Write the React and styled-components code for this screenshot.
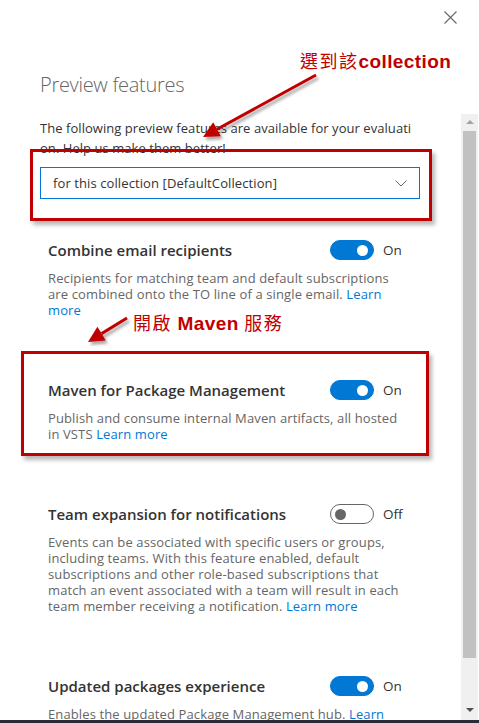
import React from "react";
import styled, { createGlobalStyle } from "styled-components";

const Global = createGlobalStyle`
  html, body { margin: 0; padding: 0; background: #fff; }
  body { font-family: "Open Sans", "Noto Sans", sans-serif; }
  * { box-sizing: border-box; }
`;

const Panel = styled.div`
  position: relative;
  width: 479px;
  height: 723px;
  overflow: hidden;
  background: #fff;
  display: flex;
  flex-direction: column;
`;

const Header = styled.div`
  height: 34px;
  display: flex;
  justify-content: flex-end;
  align-items: center;
  padding-right: 22px;
`;

const CloseButton = styled.button`
  width: 14px;
  height: 14px;
  padding: 0;
  border: none;
  background: none;
  display: flex;
  align-items: center;
  justify-content: center;
`;

const TitleArea = styled.div`
  height: 80px;
  padding: 38px 0 0 40px;
`;

const Title = styled.h1`
  margin: 0;
  font-size: 20px;
  line-height: 26px;
  font-weight: 300;
  color: #666;
  letter-spacing: -0.3px;
`;

const ScrollRegion = styled.div`
  flex: 1;
  display: flex;
  min-height: 0;
`;

const Content = styled.div`
  flex: 1;
  overflow: hidden;
  padding: 4px 0 0 40px;
`;

const Intro = styled.p`
  margin: 0;
  font-size: 13px;
  line-height: 20px;
  color: #333;
  letter-spacing: 0.05px;
`;

const Select = styled.div`
  margin-top: 9px;
  width: 380px;
  height: 32px;
  border: 1px solid #0078d4;
  display: flex;
  align-items: center;
  justify-content: space-between;
  padding: 0 12px 0 12px;
  font-size: 13px;
  letter-spacing: 0.1px;
  color: #333;
`;

const FeatureList = styled.div`
  margin-top: 41px;
  padding-left: 8px;
  display: flex;
  flex-direction: column;
  gap: 62px;
`;

const Feature = styled.div`
  width: 363px;
`;

const FeatureHead = styled.div`
  height: 20px;
  display: flex;
  align-items: center;
  justify-content: space-between;
`;

const FeatureTitle = styled.div`
  font-size: 15px;
  font-weight: 600;
  color: #333;
`;

const ToggleGroup = styled.div`
  display: flex;
  align-items: center;
  gap: 9px;
`;

const Toggle = styled.div`
  width: 44px;
  height: 20px;
  border-radius: 10px;
  display: flex;
  align-items: center;
  justify-content: ${(p) => (p.$on ? "flex-end" : "flex-start")};
  padding: 0 ${(p) => (p.$on ? "5px" : "4px")};
  background: ${(p) => (p.$on ? "#0078d4" : "#fff")};
  border: 1px solid ${(p) => (p.$on ? "#0078d4" : "#666")};
`;

const Knob = styled.span`
  width: 11px;
  height: 11px;
  border-radius: 50%;
  background: ${(p) => (p.$on ? "#fff" : "#666")};
`;

const ToggleLabel = styled.span`
  width: 28px;
  font-size: 13.5px;
  color: #333;
`;

const Desc = styled.p`
  margin: 10px 0 0;
  font-size: 13px;
  line-height: 16px;
  color: #666;
  letter-spacing: 0.12px;
`;

const Link = styled.a`
  color: #0078d4;
  text-decoration: none;
`;

const Scrollbar = styled.div`
  width: 17px;
  margin-right: 1px;
  background: #f0f0f0;
  display: flex;
  flex-direction: column;
  align-items: center;
  padding: 6px 0 8px;
`;

const Arrow = styled.div`
  width: 0;
  height: 0;
  border-left: 4px solid transparent;
  border-right: 4px solid transparent;
  ${(p) =>
    p.$down
      ? `border-top: 4px solid #505050; margin-top: auto;`
      : `border-bottom: 4px solid #a3a3a3;`}
`;

const Thumb = styled.div`
  margin-top: 7px;
  width: 13px;
  height: 527px;
  background: #c1c1c1;
`;

const BottomStrip = styled.div`
  height: 3px;
  background: #2b2b38;
`;

/* ---------- annotation overlay ---------- */

const RedBox = styled.div`
  position: absolute;
  border: 3px solid #c00000;
  box-shadow: 3px 4px 4px rgba(0, 0, 0, 0.28);
  pointer-events: none;
`;

const RedLabel = styled.div`
  position: absolute;
  color: #c00000;
  font-family: "Liberation Sans", "Noto Sans CJK TC", sans-serif;
  font-weight: 700;
  font-size: 19px;
  line-height: 22px;
  white-space: nowrap;
  letter-spacing: 0.4px;
`;

const Cjk = styled.span`
  font-family: "Noto Sans CJK TC", sans-serif;
  font-weight: 400;
  font-size: 18px;
  letter-spacing: 1.5px;
`;

const Overlay = styled.svg`
  position: absolute;
  left: 0;
  top: 0;
  pointer-events: none;
`;

const features = [
  {
    title: "Combine email recipients",
    on: true,
    lines: [
      "Recipients for matching team and default subscriptions",
      "are combined onto the TO line of a single email. ",
    ],
    linkSplit: true,
  },
  {
    title: "Maven for Package Management",
    on: true,
    lines: ["Publish and consume internal Maven artifacts, all hosted", "in VSTS "],
  },
  {
    title: "Team expansion for notifications",
    on: false,
    lines: [
      "Events can be associated with specific users or groups,",
      "including teams. With this feature enabled, default",
      "subscriptions and other role-based subscriptions that",
      "match an event associated with a team will result in each",
      "team member receiving a notification. ",
    ],
  },
  {
    title: "Updated packages experience",
    on: true,
    lines: ["Enables the updated Package Management hub. "],
    linkSplit: true,
  },
];

function FeatureItem({ f }) {
  return (
    <Feature>
      <FeatureHead>
        <FeatureTitle>{f.title}</FeatureTitle>
        <ToggleGroup>
          <Toggle $on={f.on}>
            <Knob $on={f.on} />
          </Toggle>
          <ToggleLabel>{f.on ? "On" : "Off"}</ToggleLabel>
        </ToggleGroup>
      </FeatureHead>
      <Desc>
        {f.lines.map((l, i) => (
          <React.Fragment key={i}>
            {l}
            {i < f.lines.length - 1 && <br />}
          </React.Fragment>
        ))}
        {f.linkSplit ? (
          <Link href="#">
            Learn
            <br />
            more
          </Link>
        ) : (
          <Link href="#">Learn more</Link>
        )}
      </Desc>
    </Feature>
  );
}

export default function App() {
  return (
    <>
      <Global />
      <Panel>
        <Header>
          <CloseButton aria-label="Close">
            <svg width="13" height="13" viewBox="0 0 13 13">
              <path d="M0.5 0.5 L12.5 12.5 M12.5 0.5 L0.5 12.5" stroke="#666" strokeWidth="1.1" fill="none" />
            </svg>
          </CloseButton>
        </Header>
        <TitleArea>
          <Title>Preview features</Title>
        </TitleArea>
        <ScrollRegion>
          <Content>
            <Intro>
              The following preview features are available for your evaluati
              <br />
              on. Help us make them better!
            </Intro>
            <Select>
              <span>for this collection [DefaultCollection]</span>
              <svg width="12" height="7" viewBox="0 0 12 7">
                <path d="M0.5 0.5 L6 6 L11.5 0.5" stroke="#666" strokeWidth="1" fill="none" />
              </svg>
            </Select>
            <FeatureList>
              {features.map((f) => (
                <FeatureItem key={f.title} f={f} />
              ))}
            </FeatureList>
          </Content>
          <Scrollbar>
            <Arrow />
            <Thumb />
            <Arrow $down />
          </Scrollbar>
        </ScrollRegion>
        <BottomStrip />

        <RedBox style={{ left: 30, top: 149, width: 402, height: 72 }} />
        <RedBox style={{ left: 21, top: 351, width: 408, height: 105 }} />
        <RedLabel style={{ left: 300, top: 49 }}>
          <Cjk>選到該</Cjk>collection
        </RedLabel>
        <RedLabel style={{ left: 133, top: 311 }}>
          <Cjk>開啟 </Cjk>Maven<Cjk> 服務</Cjk>
        </RedLabel>
        <Overlay width="479" height="723" viewBox="0 0 479 723">
          <defs>
            <filter id="sh" x="-20%" y="-20%" width="140%" height="140%">
              <feDropShadow dx="2" dy="3" stdDeviation="1.6" floodColor="#000" floodOpacity="0.35" />
            </filter>
          </defs>
          <g filter="url(#sh)" fill="#c00000" stroke="#c00000">
            <line x1="316" y1="75" x2="217" y2="129.3" strokeWidth="3" />
            <polygon points="203,137 220.9,136.3 213.2,122.3" stroke="none" />
            <line x1="127" y1="318" x2="101.6" y2="333.6" strokeWidth="3" />
            <polygon points="88,342 105.8,340.4 97.4,326.8" stroke="none" />
          </g>
        </Overlay>
      </Panel>
    </>
  );
}
